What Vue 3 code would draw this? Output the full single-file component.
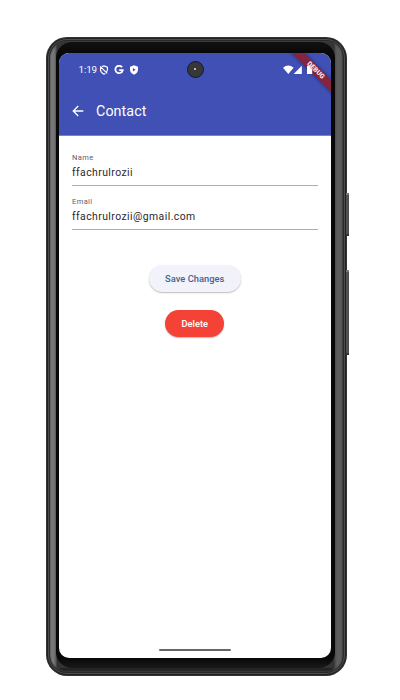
<script setup>
const fields = [
  { label: 'Name', value: 'ffachrulrozii' },
  { label: 'Email', value: 'ffachrulrozii@gmail.com' },
]
</script>

<template>
  <main class="stage">
    <div class="phone">
      <i class="key power"></i>
      <i class="key volume"></i>
      <div class="bezel">
        <div class="screen">
          <header>
            <div class="status">
              <span class="time">1:19</span>
              <svg class="s1" viewBox="0 0 10 10"><path d="M2.8 1.6 5 .9 8.4 2.2V4.8Q8.3 6 7.5 7M6.4 8.4 5 9.2Q1.6 7.7 1.5 4.8V2.6M1.2 1.4 8.2 8.4" fill="none" stroke="#fff" stroke-width="1.15" /></svg>
              <svg class="s2" viewBox="0 0 10 10"><path d="M8.1 2.3A3.7 3.7 0 1 0 8.7 5.2H5.2" fill="none" stroke="#fff" stroke-width="1.8" /></svg>
              <svg class="s3" viewBox="0 0 10 10"><path d="M5 .2 9 1.7V4.8Q8.8 8.2 5 9.8 1.2 8.2 1 4.8V1.7Z" fill="#fff" /><path d="M3.9 3 6.6 4.8 3.9 6.6Z" fill="#4150b5" /></svg>
              <svg class="signals" viewBox="0 0 32 10"><path d="M0 2.7Q5.3-1.5 10.6 2.7L5.3 8.9Z" fill="#fff" /><path d="M18.8.8V8.9H10.7Z" fill="#fff" /><path d="M24 .8H25.6V0H27.6V.8H29.2V9H24Z" fill="#fff" /></svg>
            </div>
            <div class="bar">
              <svg class="back" viewBox="0 0 12 12"><path d="M11.3 6H1.5M6.2 1.1 1.3 6 6.2 10.9" fill="none" stroke="#fff" stroke-width="1.35" /></svg>
              <h1>Contact</h1>
            </div>
          </header>
          <section class="form">
            <div v-for="f in fields" :key="f.label" class="field">
              <label>{{ f.label }}</label>
              <span>{{ f.value }}</span>
            </div>
          </section>
          <div class="actions">
            <button class="save">Save Changes</button>
            <button class="delete">Delete</button>
          </div>
          <div class="home"></div>
          <div class="camera"></div>
          <div class="ribbon"></div>
          <div class="ribbon debug">DEBUG</div>
        </div>
      </div>
    </div>
  </main>
</template>

<style>
body { background: #fff; }
</style>
<style scoped>
* { box-sizing: border-box; }
.stage { height: 700px; padding: 37px 0 0 46px; overflow: hidden; font-family: Roboto, sans-serif; }
.phone {
  position: relative; width: 301px; height: 639px; padding: 5px 12px 8px 10px; border-radius: 21px;
  background:
    linear-gradient(#222, #303030) 14px 631px / 272px 8px no-repeat,
    linear-gradient(90deg, #333 3px, #777 4px, #777 8px, #555 10px, #333 11px, #333 288px, #4a4a4a 289px, #5c5c5c 291px, #5c5c5c 295px, #333 297px);
  box-shadow: inset 0 0 0 1px #333, inset 0 0 0 2px #222, inset 0 0 0 3px #4c4c4c, inset 0 0 0 4px #292929, inset 0 0 0 5px #4a4a4a66;
}
.key { position: absolute; left: 300px; width: 3px; background: #505050; border-top: 2px solid #777; border-bottom: 2px solid #333; }
.power { top: 156px; height: 43px; }
.volume { top: 233px; height: 85px; }
.bezel { height: 626px; padding: 11px 3px 10px; border-radius: 16px; background: linear-gradient(#111, #080808 11px, #080808 616px, #191919); }
.screen { position: relative; display: flex; flex-direction: column; height: 605px; width: 272px; background: #fff; border-radius: 10px; overflow: hidden; }
header { height: 83px; background: #4150b5; border-bottom: 1px solid #7883cb; color: #fff; }
.status { position: relative; z-index: 2; display: flex; align-items: center; height: 33px; padding-left: 19.5px; }
.time { width: 20.5px; font-size: 9.8px; line-height: 12px; letter-spacing: -.1px; }
.s1, .s2, .s3 { width: 10px; height: 10px; }
.s2 { margin-left: 5px; }
.s3 { margin-left: 4.5px; }
.signals { width: 32px; height: 10px; margin-left: 144.5px; }
.bar { display: flex; align-items: center; height: 49px; padding-left: 12.5px; }
.back { width: 12px; height: 12px; }
h1 { margin: 0 0 0 12.5px; font-size: 14.3px; font-weight: 400; line-height: 20px; letter-spacing: .08px; }
.form { padding: 17px 13.5px 0 13px; }
.field { display: flex; flex-direction: column; height: 33px; margin-bottom: 11px; border-bottom: 1px solid #adadb2; }
label { font-size: 7.5px; line-height: 10px; letter-spacing: .4px; color: #606066; }
.field span { margin-top: 3px; font-size: 10.4px; line-height: 14px; letter-spacing: .44px; color: #29292d; }
.actions { display: flex; flex-direction: column; align-items: center; gap: 18px; margin-top: 24px; padding-right: .6px; }
button { height: 27px; padding: 0; border: 0; border-radius: 14px; font: 500 9.3px/27px Roboto, sans-serif; letter-spacing: .03px; }
.save { width: 92px; background: #f1f2fa; color: #46628f; box-shadow: 0 1px 1.5px #0004; }
.delete { width: 59px; background: #f44336; color: #fff; box-shadow: 0 1px 1.5px #0004; }
.home { width: 72px; height: 2px; margin: auto auto 7px; border-radius: 1px; background: #666; }
.camera { position: absolute; left: 127.5px; top: 8px; width: 17px; height: 17px; border: 1px solid #171b24; border-radius: 50%; background: radial-gradient(circle at 1px 1px, #c5b6c0 0 .7px, #0000 1.5px) 6px 6px / 5px 4px no-repeat, #373737; }
.ribbon { position: absolute; z-index: 1; left: 219px; top: 13px; width: 75px; height: 9px; background: #832440; box-shadow: 0 0 4px #0006; transform: rotate(45deg); }
.debug { z-index: 3; background: none; box-shadow: none; color: #f6e3e9; text-align: center; font-size: 6.7px; font-weight: 900; line-height: 9px; text-shadow: 0 0 1px #832440; }
</style>
